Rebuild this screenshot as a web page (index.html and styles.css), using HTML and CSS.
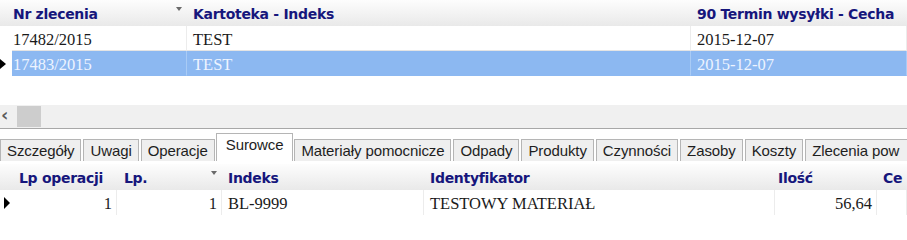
FILE: index.html
```html
<!DOCTYPE html>
<html lang="pl">
<head>
<meta charset="utf-8">
<title>Zlecenia</title>
<link rel="stylesheet" href="styles.css">
</head>
<body>
<div class="app">
  <div class="grid top">
    <div class="row head">
      <div class="cell ind"></div>
      <div class="cell hc c1"><span>Nr zlecenia</span><i class="sort"></i></div>
      <div class="cell hc c2"><span>Kartoteka - Indeks</span></div>
      <div class="cell hc c3"><span>90 Termin wysyłki - Cecha</span></div>
    </div>
    <div class="row data">
      <div class="cell ind"></div>
      <div class="cell dc c1">17482/2015</div>
      <div class="cell dc c2">TEST</div>
      <div class="cell dc c3">2015-12-07</div>
    </div>
    <div class="row data sel">
      <div class="cell ind"><i class="tri tri-top"></i></div>
      <div class="cell dc c1">17483/2015</div>
      <div class="cell dc c2">TEST</div>
      <div class="cell dc c3">2015-12-07</div>
    </div>
  </div>
  <div class="empty"></div>
  <div class="hscroll">
    <span class="arrow">&lsaquo;</span>
    <span class="thumb"></span>
  </div>
  <div class="tabs">
    <div class="tab">Szczegóły</div>
    <div class="tab">Uwagi</div>
    <div class="tab">Operacje</div>
    <div class="tab active">Surowce</div>
    <div class="tab">Materiały pomocnicze</div>
    <div class="tab">Odpady</div>
    <div class="tab">Produkty</div>
    <div class="tab">Czynności</div>
    <div class="tab">Zasoby</div>
    <div class="tab">Koszty</div>
    <div class="tab last">Zlecenia pow</div>
  </div>
  <div class="grid bottom">
    <div class="row head">
      <div class="cell ind"></div>
      <div class="cell hc b1"><span>Lp operacji</span></div>
      <div class="cell hc b2"><span>Lp.</span><i class="sort"></i></div>
      <div class="cell hc b3"><span>Indeks</span></div>
      <div class="cell hc b4"><span>Identyfikator</span></div>
      <div class="cell hc b5"><span>Ilość</span></div>
      <div class="cell hc b6"><span>Ce</span></div>
    </div>
    <div class="row data">
      <div class="cell ind"><i class="tri tri-bot"></i></div>
      <div class="cell dc b1 num">1</div>
      <div class="cell dc b2 num">1</div>
      <div class="cell dc b3">BL-9999</div>
      <div class="cell dc b4">TESTOWY MATERIAŁ</div>
      <div class="cell dc b5 num">56,64</div>
      <div class="cell dc b6"></div>
    </div>
  </div>
</div>
</body>
</html>
```
FILE: styles.css
```css
html, body {
  margin: 0;
  padding: 0;
  background: #ffffff;
}
body {
  width: 907px;
  height: 216px;
  overflow: hidden;
}
.app {
  width: 907px;
  height: 216px;
  overflow: hidden;
  display: flex;
  flex-direction: column;
}
.grid {
  display: flex;
  flex-direction: column;
}
.row {
  display: grid;
  white-space: nowrap;
}
.top .row {
  grid-template-columns: 12px 175px 504px 216px;
}
.bottom .row {
  grid-template-columns: 13px 104px 105px 202px 351px 102px 30px;
}
.cell {
  overflow: hidden;
  box-sizing: border-box;
}
.head {
  height: 26px;
  background: linear-gradient(#fdfdfd, #f3f3f3 50%, #e9e9e9);
}
.head .cell {
  display: flex;
  align-items: center;
  justify-content: space-between;
  font-family: "DejaVu Sans", sans-serif;
  font-weight: bold;
  font-size: 14px;
  letter-spacing: -0.3px;
  color: #16167c;
  padding-top: 2px;
}
.hc {
  padding-left: 1px;
  padding-right: 5px;
}
.top .c2, .top .c3 {
  padding-left: 6px;
}
.bottom .b1 { padding-left: 6px; }
.bottom .b2 { padding-left: 7px; }
.bottom .b3 { padding-left: 6px; }
.bottom .b4 { padding-left: 6px; }
.bottom .b5 { padding-left: 3px; }
.bottom .b6 { padding-left: 6px; padding-right: 0; }
.sort {
  width: 0;
  height: 0;
  border-left: 3px solid transparent;
  border-right: 3px solid transparent;
  border-top: 4px solid #6a6a6a;
  align-self: flex-start;
  margin-top: 5px;
}
.data {
  height: 25px;
}
.data .cell {
  font-family: "Liberation Serif", serif;
  font-size: 16.5px;
  color: #1a1a1a;
  line-height: 25px;
  padding-top: 1px;
  border-bottom: 1px solid #e4e4e4;
  border-right: 1px solid #ececec;
}
.data .cell.ind {
  border-right: none;
  border-bottom: none;
  position: relative;
}
.top .data .c1 { padding-left: 1px; }
.top .data .c2, .top .data .c3 { padding-left: 6px; }
.data.sel .dc {
  background: #8cb8f1;
  color: #eef4ff;
  border-bottom-color: #8cb8f1;
  border-right-color: #a9cbf5;
}
.bottom .data .cell {
  border-bottom: none;
}
.bottom .data .b3, .bottom .data .b4 { padding-left: 6px; }
.num {
  text-align: right;
  padding-right: 4px;
}
.tri {
  position: absolute;
  width: 0;
  height: 0;
  border-top: 5px solid transparent;
  border-bottom: 5px solid transparent;
  border-left: 6px solid #000;
}
.tri-top {
  left: 0;
  top: 8px;
}
.tri-bot {
  left: 4px;
  top: 7px;
  border-top-width: 6px;
  border-bottom-width: 6px;
}
.empty {
  height: 29px;
}
.hscroll {
  height: 23px;
  background: #f0f0f0;
  border-bottom: 1px solid #a8a8a8;
  display: flex;
  align-items: center;
  gap: 8px;
  padding-left: 1px;
}
.arrow {
  font-family: "DejaVu Sans", sans-serif;
  font-weight: bold;
  font-size: 18px;
  color: #5a5a5a;
  line-height: 1;
  margin-top: -3px;
  width: 8px;
}
.thumb {
  width: 24px;
  height: 21px;
  background: #cdcdcd;
}
.tabs {
  display: flex;
  align-items: flex-end;
  gap: 2px;
  height: 28px;
  margin-top: 4px;
  white-space: nowrap;
}
.tab {
  height: 22px;
  box-sizing: border-box;
  padding: 0 6px;
  background: #efefef;
  border: 1px solid #b5b5b5;
  border-bottom: none;
  font-family: "Liberation Sans", sans-serif;
  font-size: 15px;
  letter-spacing: -0.1px;
  color: #1e1e1e;
  line-height: 22px;
  flex: none;
}
.tab.last {
  flex: 1;
  border-right: none;
  padding-right: 0;
}
.tab.active {
  height: 28px;
  background: #ffffff;
  padding: 0 9px;
  margin: 0 -1px;
  line-height: 22px;
  position: relative;
}
.bottom {
  margin-top: 3px;
}
```
